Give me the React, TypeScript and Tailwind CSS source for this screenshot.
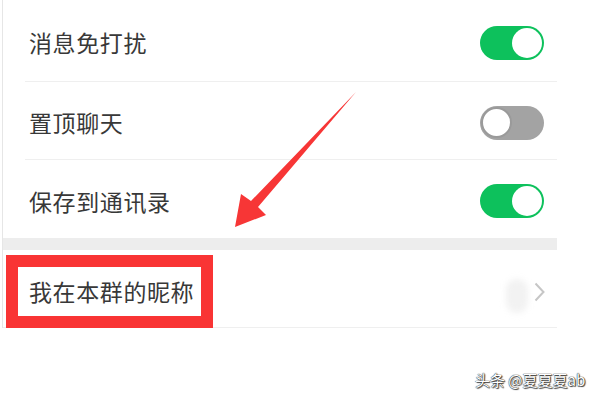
import React from 'react';

const FONT = "font-['Noto_Sans_CJK_SC','Noto_Sans',sans-serif]";

const Toggle = ({ on }: { on: boolean }) => (
  <div
    className={
      on
        ? 'w-[64px] h-[34px] rounded-full bg-[#0dc15c] flex items-center justify-end px-[2px]'
        : 'w-[64px] h-[34px] rounded-full bg-[#a3a3a3] flex items-center justify-start px-[1px]'
    }
  >
    <div
      className={
        on
          ? 'w-[30px] h-[30px] rounded-full bg-white'
          : 'w-[31px] h-[31px] rounded-full bg-white border-[2px] border-[#9a9a9a]'
      }
    />
  </div>
);

const Row = ({ label, on, h }: { label: string; on: boolean; h: string }) => (
  <div className={`${h} flex items-center justify-between pl-[26px] pr-[13px]`}>
    <span className="text-[23px] tracking-[0.6px] text-[#383838]">{label}</span>
    <Toggle on={on} />
  </div>
);

const Sep = () => <div className="h-px ml-[22px] bg-[#efefef]" />;

export default function App() {
  return (
    <div className={`relative w-[600px] h-[400px] bg-white overflow-hidden ${FONT}`}>
      <div className="ml-[2px] w-[555px] border-l border-[#e6e6e6]">
        <Row label="消息免打扰" on h="h-[81px] pt-[4px]" />
        <Sep />
        <Row label="置顶聊天" on={false} h="h-[77px] pt-[4px]" />
        <Sep />
        <Row label="保存到通讯录" on h="h-[78px] pt-[4px]" />
        <div className="h-[12px] bg-[#ededed]" />
        <div className="h-[77px] flex items-center justify-between pl-[26px] pr-[12px]">
          <span className="text-[23px] tracking-[0.6px] text-[#383838] pt-[5px]">我在本群的昵称</span>
          <div className="flex items-center">
            <div className="w-[22px] h-[34px] mt-[14px] mr-[6px] rounded-full bg-[#f2f2f2] blur-[3px]" />
            <svg width="11" height="20" viewBox="0 0 11 20" className="mt-[6px]">
              <polyline points="1.5,1.5 9.5,10 1.5,18.5" fill="none" stroke="#c6c6c6" strokeWidth="2" />
            </svg>
          </div>
        </div>
        <div className="h-px bg-[#efefef]" />
      </div>

      {/* annotation: red frame */}
      <div className="absolute left-[6px] top-[255px] w-[207px] h-[73px] border-[12px] border-[#f93434]" />

      {/* annotation: arrow */}
      <svg className="absolute left-0 top-0" width="600" height="400" viewBox="0 0 600 400">
        <polygon
          points="356,92 258,207 266,215 235,227 241,194 251,201"
          fill="#f73636"
        />
      </svg>

      {/* watermark */}
      <div className="absolute left-[475px] top-[370px] text-[15px] leading-[20px] text-white [text-shadow:0_0_1px_#222,0_0_1px_#222,1px_1px_1px_#444]">
        头条 @夏夏夏ab
      </div>
    </div>
  );
}
